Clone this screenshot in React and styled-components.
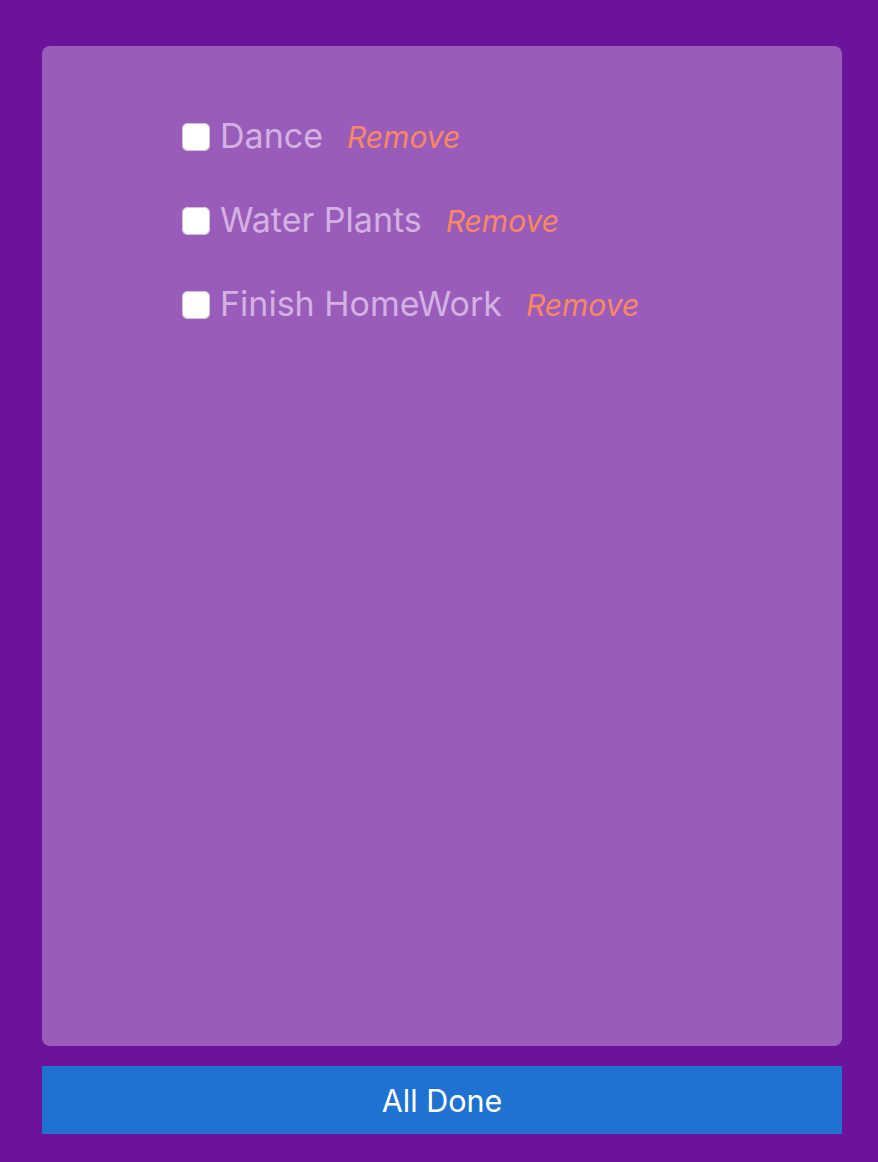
import React, { useState } from "react";
import styled, { createGlobalStyle } from "styled-components";

const GlobalStyle = createGlobalStyle`
  html, body {
    margin: 0;
    padding: 0;
    background: #6c139c;
    font-family: Inter, "Noto Sans", sans-serif;
  }
`;

const Page = styled.div`
  width: 878px;
  height: 1162px;
  box-sizing: border-box;
  padding: 46px 36px 0 42px;
  display: flex;
  flex-direction: column;
  gap: 20px;
`;

const Card = styled.div`
  width: 800px;
  height: 1000px;
  box-sizing: border-box;
  background: #9a5cba;
  border-radius: 8px;
  padding: 64px 0 0 140px;
  display: flex;
  flex-direction: column;
  gap: 34px;
`;

const Row = styled.div`
  display: flex;
  align-items: center;
  height: 50px;
`;

const Check = styled.input.attrs({ type: "checkbox" })`
  appearance: none;
  width: 28px;
  height: 28px;
  margin: 4px 10px 0 0;
  background: #fff;
  border-radius: 6px;
  box-shadow: inset 0 0 0 1px #cfc4d6;
`;

const Label = styled.span`
  font-size: 34px;
  color: #d3b1e2;
  text-decoration: ${(p) => (p.$done ? "line-through" : "none")};
`;

const Remove = styled.button`
  background: none;
  border: none;
  padding: 0;
  margin: 4px 0 0 24px;
  font-family: inherit;
  font-size: 30px;
  font-style: italic;
  color: #f98862;
  cursor: pointer;
`;

const DoneButton = styled.button`
  width: 800px;
  height: 68px;
  border: none;
  background: #1f72d0;
  color: #fff;
  font-family: inherit;
  font-size: 30.5px;
  cursor: pointer;
`;

const initial = ["Dance", "Water Plants", "Finish HomeWork"];

export default function App() {
  const [todos, setTodos] = useState(initial.map((t) => ({ text: t, done: false })));

  return (
    <>
      <GlobalStyle />
      <Page>
        <Card>
          {todos.map((t, i) => (
            <Row key={t.text}>
              <Check
                checked={t.done}
                onChange={() =>
                  setTodos(todos.map((x, j) => (j === i ? { ...x, done: !x.done } : x)))
                }
              />
              <Label $done={t.done}>{t.text}</Label>
              <Remove onClick={() => setTodos(todos.filter((_, j) => j !== i))}>Remove</Remove>
            </Row>
          ))}
        </Card>
        <DoneButton onClick={() => setTodos(todos.map((x) => ({ ...x, done: true })))}>
          All Done
        </DoneButton>
      </Page>
    </>
  );
}
